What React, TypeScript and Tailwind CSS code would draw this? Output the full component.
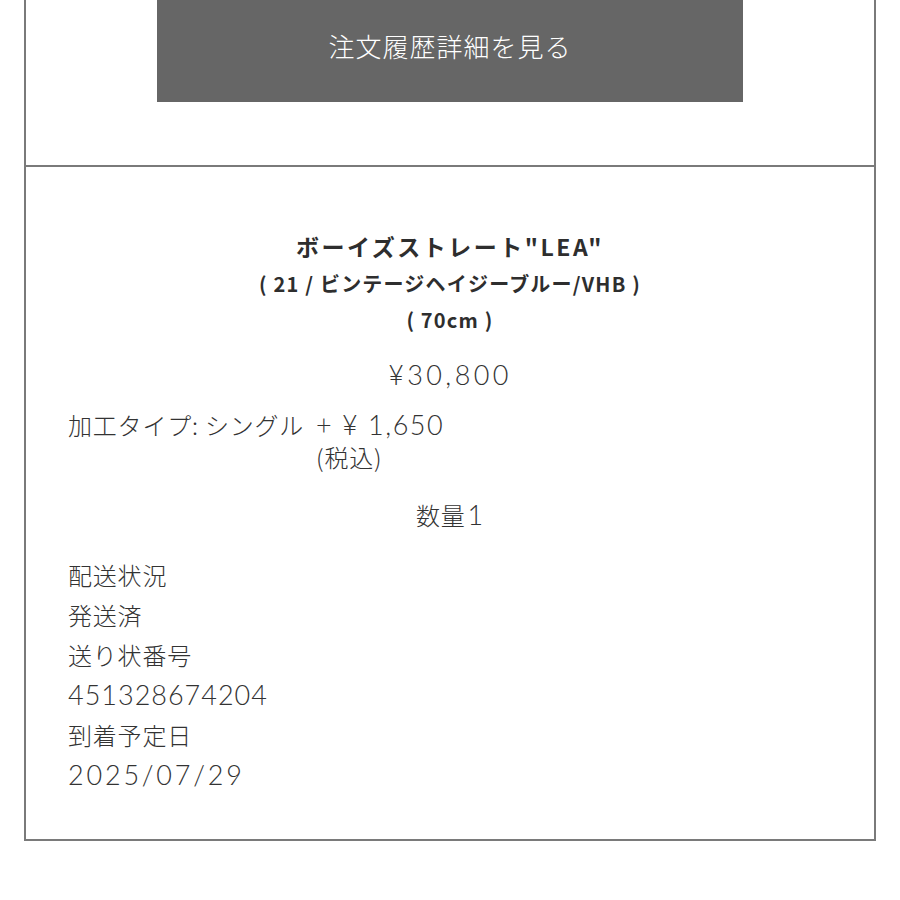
import React from "react";

const jp = { fontFamily: '"Noto Sans CJK JP", "Noto Sans", sans-serif' };
const num = { fontFamily: 'Lato, "Noto Sans CJK JP", sans-serif' };

function Num({ children, className = "" }: { children: React.ReactNode; className?: string }) {
  return (
    <span className={className} style={num}>
      {children}
    </span>
  );
}

export default function App() {
  return (
    <div className="w-[900px] h-[900px] bg-white overflow-hidden" style={jp}>
      <div className="ml-[24px] w-[852px] border-x-2 border-b-2 border-[#7a7a7a] text-[#333]">
        {/* order history link */}
        <div className="h-[165px] flex justify-center">
          <button className="w-[586px] h-[102px] bg-[#666666] text-white text-[26px] font-light tracking-[1px] pb-[12px]">
            注文履歴詳細を見る
          </button>
        </div>

        {/* item details */}
        <div className="border-t-2 border-[#7a7a7a] pt-[60px] pb-[44px] px-[42px]">
          <div className="text-center font-bold text-[#2e2e2e]">
            <div className="text-[23px] leading-[38px] tracking-[2.5px]">ボーイズストレート"LEA"</div>
            <div className="text-[20px] leading-[37px] tracking-[1.2px]">( 21 / ビンテージヘイジーブルー/VHB )</div>
            <div className="text-[20px] leading-[36px] tracking-[1.2px]">( 70cm )</div>
          </div>

          <div className="mt-[18px] text-center leading-[38px]">
            <Num className="text-[27px] font-light tracking-[3.4px]">¥30,800</Num>
          </div>

          <div className="mt-[11px] flex text-[24px] font-light leading-[34px] tracking-[0.8px]">
            <span>加工タイプ: シングル</span>
            <div className="ml-[12px]">
              <div>
                <Num className="text-[27px] font-light tracking-[1.5px]">+ ¥ 1,650</Num>
              </div>
              <div className="-mt-[2px]">(税込)</div>
            </div>
          </div>

          <div className="mt-[24px] text-center text-[24px] font-light leading-[34px] tracking-[0.8px]">
            数量<Num className="text-[27px] font-light ml-[2px]">1</Num>
          </div>

          <div className="mt-[23px] text-[24px] font-light leading-[40px] tracking-[0.8px]">
            <div>配送状況</div>
            <div>発送済</div>
            <div>送り状番号</div>
            <div>
              <Num className="text-[27px] font-light tracking-[1px]">451328674204</Num>
            </div>
            <div>到着予定日</div>
            <div>
              <Num className="text-[27px] font-light tracking-[2.8px]">2025/07/29</Num>
            </div>
          </div>
        </div>
      </div>
    </div>
  );
}
